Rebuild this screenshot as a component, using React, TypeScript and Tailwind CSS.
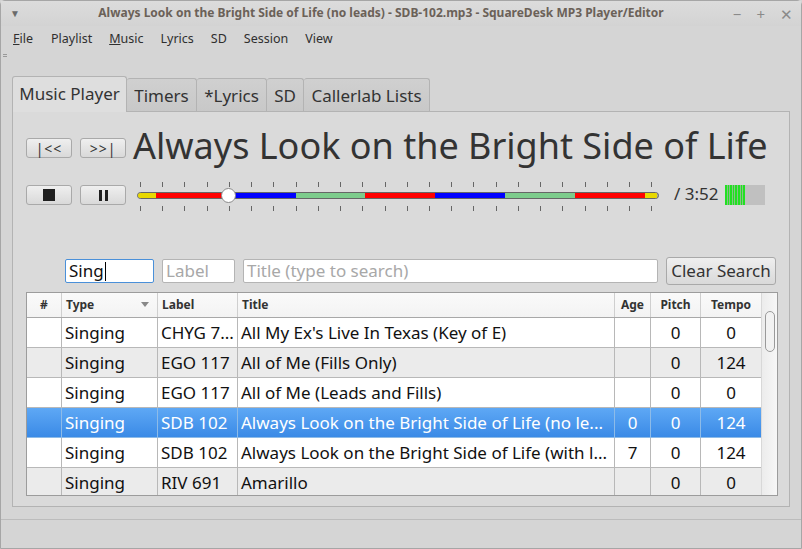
import React from "react";

const FONT = { fontFamily: '"Noto Sans", "Open Sans", sans-serif' };

const ticks = Array.from({ length: 24 }, (_, i) => i);

const segs: [number, number, string][] = [
  [0, 18, "#e8d800"],
  [18, 91, "#ff0000"],
  [91, 158, "#0000ff"],
  [158, 227, "#7dcc8c"],
  [227, 297, "#ff0000"],
  [297, 367, "#0000ff"],
  [367, 437, "#7dcc8c"],
  [437, 507, "#ff0000"],
  [507, 519, "#e8d800"],
];

type Row = { type: string; label: string; title: string; age: string; pitch: string; tempo: string };
const rows: Row[] = [
  { type: "Singing", label: "CHYG 7...", title: "All My Ex's Live In Texas (Key of E)", age: "", pitch: "0", tempo: "0" },
  { type: "Singing", label: "EGO 117", title: "All of Me (Fills Only)", age: "", pitch: "0", tempo: "124" },
  { type: "Singing", label: "EGO 117", title: "All of Me (Leads and Fills)", age: "", pitch: "0", tempo: "0" },
  { type: "Singing", label: "SDB 102", title: "Always Look on the Bright Side of Life (no le...", age: "0", pitch: "0", tempo: "124" },
  { type: "Singing", label: "SDB 102", title: "Always Look on the Bright Side of Life (with l...", age: "7", pitch: "0", tempo: "124" },
  { type: "Singing", label: "RIV 691", title: "Amarillo", age: "", pitch: "0", tempo: "0" },
];

function Btn({ children }: { children: React.ReactNode }) {
  return (
    <div className="w-[46px] h-[20px] shrink-0 flex items-center justify-center rounded-[3px] border border-[#a9a9a9] bg-gradient-to-b from-[#efefef] to-[#d9d9d9] text-[#333]">
      {children}
    </div>
  );
}

export default function App() {
  return (
    <div style={FONT} className="w-[802px] h-[549px] overflow-hidden bg-[#d4d4d4] text-[#333]">
      <div className="w-full h-full flex flex-col border border-[#a6a6a6] rounded-t-[5px] bg-[#d5d5d5]">
        {/* title bar */}
        <div className="h-[25px] shrink-0 flex items-center relative bg-gradient-to-b from-[#dcdcdc] to-[#d3d3d3]">
          <span className="absolute left-[9px] top-[5px] text-[10px] text-[#6a6a6a]">▼</span>
          <div className="flex-1 text-center text-[12px] font-bold text-[#6b6158] pr-[40px] -mt-[1px]">
            Always Look on the Bright Side of Life (no leads) - SDB-102.mp3 - SquareDesk MP3 Player/Editor
          </div>
          <div className="absolute right-[8px] top-[2px] flex gap-[15px] text-[15px] text-[#8a8a8a]">
            <span>−</span>
            <span>+</span>
            <span>✕</span>
          </div>
        </div>
        {/* menu bar */}
        <div className="h-[26px] shrink-0 flex items-center text-[12.5px] text-[#2f2f2f] pl-[12px] pt-[1px]">
          <span className="mr-[18px]"><span className="underline">F</span>ile</span>
          <span className="mr-[17px]">Playlist</span>
          <span className="mr-[17px]"><span className="underline">M</span>usic</span>
          <span className="mr-[17px]">Lyrics</span>
          <span className="mr-[17px]">SD</span>
          <span className="mr-[17px]">Session</span>
          <span>View</span>
        </div>
        <div className="h-[8px] shrink-0 relative">
          <span className="absolute left-[2px] top-[2px] w-[4px] h-[3px] border-t border-b border-[#999]"></span>
        </div>
        {/* central area */}
        <div className="flex-1 flex flex-col pl-[11px] pr-[11px] pt-[15px]">
          {/* tabs */}
          <div className="flex items-end h-[36px] shrink-0 text-[17px] text-[#333]">
            <div className="h-[36px] w-[115px] flex items-center justify-center rounded-t-[3px] border border-b-0 border-[#b3b3b3] bg-[#dedede] relative z-10 -mb-px pb-[1px]">
              Music Player
            </div>
            <div className="h-[33px] w-[70px] flex items-center justify-center rounded-t-[3px] border border-l-0 border-b-0 border-[#b3b3b3] bg-gradient-to-b from-[#d0d0d0] to-[#c8c8c8] pt-[1px]">
              Timers
            </div>
            <div className="h-[33px] w-[70px] flex items-center justify-center rounded-t-[3px] border border-l-0 border-b-0 border-[#b3b3b3] bg-gradient-to-b from-[#d0d0d0] to-[#c8c8c8] pt-[1px]">
              *Lyrics
            </div>
            <div className="h-[33px] w-[37px] flex items-center justify-center rounded-t-[3px] border border-l-0 border-b-0 border-[#b3b3b3] bg-gradient-to-b from-[#d0d0d0] to-[#c8c8c8] pt-[1px]">
              SD
            </div>
            <div className="h-[33px] w-[126px] flex items-center justify-center rounded-t-[3px] border border-l-0 border-b-0 border-[#b3b3b3] bg-gradient-to-b from-[#d0d0d0] to-[#c8c8c8] pt-[1px]">
              Callerlab Lists
            </div>
          </div>
          {/* pane */}
          <div className="h-[396px] shrink-0 border border-[#b3b3b3] bg-[#dadada] pl-[13px] pr-[11px] pt-[14px] flex flex-col">
            {/* row 1 */}
            <div className="flex items-center h-[44px]">
              <Btn><span className="text-[14px] tracking-[1px]">|&lt;&lt;</span></Btn>
              <div className="w-[8px] shrink-0" />
              <Btn><span className="text-[14px] tracking-[1px]">&gt;&gt;|</span></Btn>
              <div className="ml-[7px] text-[36px] leading-none text-[#333] whitespace-nowrap -mt-[4px]">
                Always Look on the Bright Side of Life
              </div>
            </div>
            {/* row 2 */}
            <div className="flex items-center h-[44px] mt-[3px]">
              <Btn>
                <div className="w-[12px] h-[12px] bg-[#1f1f1f]" />
              </Btn>
              <div className="w-[8px] shrink-0" />
              <Btn>
                <div className="flex gap-[3px]">
                  <div className="w-[3px] h-[11px] bg-[#1f1f1f]" />
                  <div className="w-[3px] h-[11px] bg-[#1f1f1f]" />
                </div>
              </Btn>
              {/* slider */}
              <div className="ml-[11px] w-[522px] h-[34px] shrink-0 relative">
                {ticks.map((i) => (
                  <React.Fragment key={i}>
                    <div className="absolute w-px h-[5px] bg-[#666] top-[4px]" style={{ left: 3 + i * 22.23 }} />
                    <div className="absolute w-px h-[5px] bg-[#666] top-[28px]" style={{ left: 3 + i * 22.23 }} />
                  </React.Fragment>
                ))}
                <div className="absolute left-0 right-0 top-[14px] h-[7px] rounded-full border border-[#666] bg-[#aaa] overflow-hidden">
                  {segs.map(([a, b, c], i) => (
                    <div key={i} className="absolute top-0 bottom-0" style={{ left: a, width: b - a, background: c }} />
                  ))}
                </div>
                <div className="absolute left-[84px] top-[10px] w-[15px] h-[15px] rounded-full bg-white border border-[#8a8a8a]" />
              </div>
              <div className="ml-[15px] text-[17px] text-[#333] -mt-[2px]">/ 3:52</div>
              <div className="ml-[7px] w-[40px] h-[20px] shrink-0 bg-[#c0c0c0] flex">
                <div className="w-[20px] h-full bg-[repeating-linear-gradient(90deg,#22e022_0px,#22e022_1.5px,#86c486_1.5px,#86c486_2.6px)]" />
              </div>
            </div>
            {/* search row */}
            <div className="flex items-center h-[28px] mt-[40px]">
              <div className="ml-[39px] w-[89px] h-[24px] border border-[#4a90d9] rounded-[2px] bg-white flex items-center pl-[3px] text-[17px] text-[#111]">
                Sing<span className="inline-block w-px h-[19px] bg-black ml-[1px]" />
              </div>
              <div className="ml-[8px] w-[73px] h-[24px] border border-[#b4b4b4] rounded-[2px] bg-white flex items-center pl-[3px] text-[17px] text-[#a8a8a8]">
                Label
              </div>
              <div className="ml-[8px] w-[415px] h-[24px] border border-[#b4b4b4] rounded-[2px] bg-white flex items-center pl-[3px] text-[17px] text-[#a8a8a8]">
                Title (type to search)
              </div>
              <div className="ml-[8px] w-[110px] h-[28px] rounded-[3px] border border-[#a9a9a9] bg-gradient-to-b from-[#efefef] to-[#d9d9d9] flex items-center justify-center text-[17px] text-[#333]">
                Clear Search
              </div>
            </div>
            {/* table */}
            <div className="mt-[7px] w-[752px] h-[204px] border border-[#9c9c9c] bg-white flex overflow-hidden">
              <div className="w-[734px] flex flex-col">
                <div className="h-[25px] flex text-[12px] font-bold text-[#333] border-b border-[#a8a8a8] bg-gradient-to-b from-[#fafafa] to-[#f3f3f3] shrink-0">
                  <div className="w-[35px] border-r border-[#cfcfcf] flex items-center justify-center">#</div>
                  <div className="w-[96px] border-r border-[#cfcfcf] flex items-center pl-[4px] relative">
                    Type
                    <span className="absolute right-[8px] top-[9px] w-0 h-0 border-l-[4px] border-r-[4px] border-t-[5px] border-l-transparent border-r-transparent border-t-[#888]" />
                  </div>
                  <div className="w-[80px] border-r border-[#cfcfcf] flex items-center pl-[4px]">Label</div>
                  <div className="w-[377px] border-r border-[#cfcfcf] flex items-center pl-[4px]">Title</div>
                  <div className="w-[36px] border-r border-[#cfcfcf] flex items-center justify-center">Age</div>
                  <div className="w-[50px] border-r border-[#cfcfcf] flex items-center justify-center">Pitch</div>
                  <div className="w-[60px] flex items-center justify-center">Tempo</div>
                </div>
                {rows.map((r, i) => {
                  const sel = i === 3;
                  const bg = sel
                    ? "bg-gradient-to-b from-[#5ea8f5] to-[#3a8ae6] text-white"
                    : i % 2 === 1
                    ? "bg-[#ebebeb] text-[#111]"
                    : "bg-white text-[#111]";
                  const bc = sel ? "border-[#8dbbe8]" : "border-[#b8b8b8]";
                  return (
                    <div key={i} className={`h-[30px] shrink-0 flex text-[17px] border-b ${bc} ${bg}`}>
                      <div className={`w-[35px] border-r ${bc}`} />
                      <div className={`w-[96px] border-r ${bc} flex items-center pl-[3px]`}>{r.type}</div>
                      <div className={`w-[80px] border-r ${bc} flex items-center pl-[3px] whitespace-nowrap`}>{r.label}</div>
                      <div className={`w-[377px] border-r ${bc} flex items-center pl-[3px] whitespace-nowrap overflow-hidden`}>{r.title}</div>
                      <div className={`w-[36px] border-r ${bc} flex items-center justify-center`}>{r.age}</div>
                      <div className={`w-[50px] border-r ${bc} flex items-center justify-center`}>{r.pitch}</div>
                      <div className="w-[60px] flex items-center justify-center">{r.tempo}</div>
                    </div>
                  );
                })}
              </div>
              <div className="w-[16px] h-full bg-gradient-to-r from-[#ececec] to-[#f7f7f7] border-l border-[#d8d8d8] relative">
                <div className="absolute left-[3px] top-[18px] w-[10px] h-[41px] rounded-[5px] border border-[#9a9a9a] bg-[#f2f2f2]" />
              </div>
            </div>
          </div>
        </div>
        {/* status bar */}
        <div className="h-[29px] shrink-0 border-t border-[#bcbcbc] bg-[#d5d5d5]" />
      </div>
    </div>
  );
}
